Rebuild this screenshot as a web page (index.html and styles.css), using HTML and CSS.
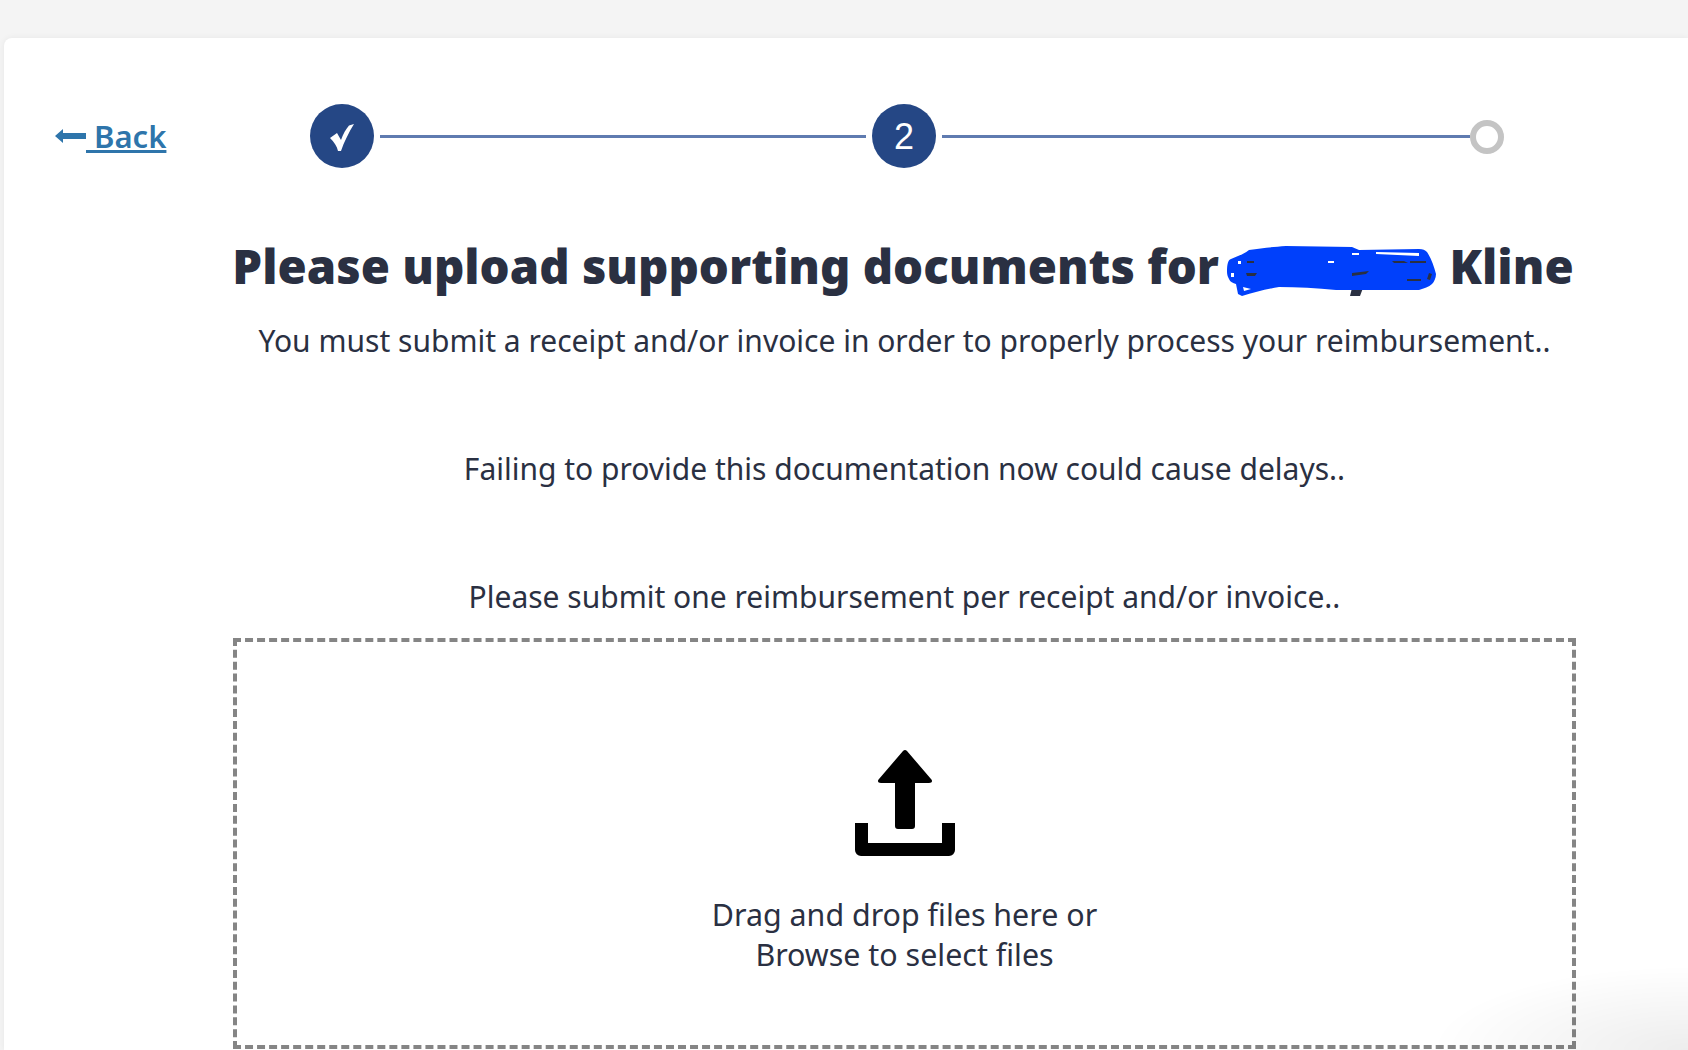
FILE: index.html
```html
<!DOCTYPE html>
<html lang="en">

<head>
    <meta charset="UTF-8">
    <title>Upload supporting documents</title>
    <link rel="stylesheet" href="styles.css">
</head>

<body>

    <div class="card">
        <!-- Back link and steps -->
        <div class="top-row">
            <a href="#" class="back">
                <svg class="back-arrow" width="31" height="16" viewBox="0 0 31 16"><path d="M0 8 8 1v4h23v6H8v4z" fill="#2e75ab"/></svg><span class="back-text">&nbsp;Back</span>
            </a>
            <div class="stepper">
                <div class="step">
                    <svg width="64" height="64" viewBox="0 0 64 64"><path d="M20 34 27 29 31 36C33 30 36 25 39 21.500L44 20C39 28 34 38 31 47H28C27 42 24 38 20 34z" fill="#fff"/></svg>
                </div>
                <div class="step-line step-line-first"></div>
                <div class="step step-number">2</div>
                <div class="step-line"></div>
                <div class="step-todo"></div>
            </div>
        </div>

        <!-- Main content -->
        <div class="content">
            <h1>Please upload supporting documents for <span class="redacted"><svg width="210" height="52" viewBox="0 0 210 52"><path d="M125 42h11l-3 8h-10z" fill="#2a3042"/><path d="M0 26C0 18 1 14 4 13 10 10 16 9 22 4 35 2 45 1 59 0L125 1 132 4 192 3C196 3 198 4 200 6 204 12 207 20 209 28 209 32 207 36 205 38 202 41 197 42 192 44L109 44C90 42 70 41 52 41 40 43 27 46 15 50L11 48 9 38C6 37 3 36 2 33 1 31 0 29 0 26z" fill="#0040fb"/><path d="M19 27h11l-2 3H20zM20 15h7v2h-7zM125 27l17-2-3 3-14 2zM165 15h12l4 2h-14zM183 15h16v2h-16zM180 33h14v2h-14zM202 27l3 1-2 6-3-1z" fill="#2a3042"/><path d="M149 6l43 1v3l-43-2zM125 7h7v2h-7zM101 15h6v2h-6zM11 15h3v3h-3zM4 27h3v4H4zM16 41l8 2-7 2z" fill="#fff"/></svg></span> Kline</h1>
            <p>You must submit a receipt and/or invoice in order to properly process your reimbursement..</p>
            <p>Failing to provide this documentation now could cause delays..</p>
            <p>Please submit one reimbursement per receipt and/or invoice..</p>

            <div class="dropzone">
                <svg class="upload-icon" width="100" height="106" viewBox="0 0 100 106">
                    <path d="M48 1a3 3 0 0 1 4 0L76 29c2 2 1 4-2 4H60v43a3 3 0 0 1-3 3H43a3 3 0 0 1-3-3V33H26c-3 0-4-2-2-4z"/>
                    <path d="M0 73h13v20h74V73h13v27a6 6 0 0 1-6 6H6a6 6 0 0 1-6-6z"/>
                </svg>
                <div class="drop-text">Drag and drop files here or<br>Browse to select files</div>
            </div>
        </div>
    </div>

    <div class="corner-shade"></div>

</body>

</html>
```

FILE: styles.css
```css
html, body {
    height: 100%;
    overflow: hidden;
}

body {
    font-family: 'Noto Sans', sans-serif;
    margin: 0;
    padding: 38px 0 0 4px;
    box-sizing: border-box;
    background-color: #f4f4f4;
    color: #2a3042;
}

.card {
    background-color: white;
    border-radius: 8px 0 0 0;
    box-shadow: 0 0 6px rgba(0, 0, 0, 0.06);
    height: 1012px;
    padding-left: 51px;
}

/* Back link and steps */
.top-row {
    display: flex;
    align-items: flex-start;
    padding-top: 66px;
}

.back {
    display: flex;
    align-items: center;
    width: 255px;
    height: 64px;
    color: #2e75ab;
    font-size: 31px;
    font-weight: 600;
    text-decoration: none;
}

.back-text {
    text-decoration: underline;
}

.stepper {
    display: flex;
    align-items: center;
    width: 1194px;
}

.step {
    display: flex;
    align-items: center;
    justify-content: center;
    flex: none;
    width: 64px;
    height: 64px;
    border-radius: 50%;
    background-color: #254785;
    color: white;
    font-family: 'Liberation Sans', sans-serif;
    font-size: 36px;
}

.step-number {
    box-sizing: border-box;
    padding-top: 2px;
}

.step-line {
    flex: 1;
    height: 3px;
    margin-left: 6px;
    background-color: #5f7bb0;
}

.step-line-first {
    flex: none;
    width: 486px;
    margin-right: 6px;
}

.step-todo {
    flex: none;
    width: 34px;
    height: 34px;
    margin-top: 1px;
    box-sizing: border-box;
    border: 6px solid #c4c4c4;
    border-radius: 50%;
}

/* Main content */
.content {
    width: 1343px;
    margin-left: 178px;
    text-align: center;
}

h1 {
    margin: 67px 0 0 -3px;
    font-size: 47.300px;
    line-height: 62px;
    font-weight: 900;
    white-space: nowrap;
}

.redacted {
    display: inline-block;
    width: 210px;
    height: 52px;
    margin-left: -4px;
    vertical-align: -14px;
}

p {
    margin: 0 0 88px;
    font-size: 30px;
    line-height: 40px;
}

h1 + p {
    margin-top: 23px;
}

.content p:last-of-type {
    margin-bottom: 21px;
}

.dropzone {
    box-sizing: border-box;
    height: 411px;
    padding-top: 108px;
    border: 4px dashed #858585;
}

.upload-icon {
    display: block;
    margin: 0 auto 39px;
}

.drop-text {
    font-size: 30.400px;
    line-height: 40px;
}

/* Soft shade in the corner of the window */
.corner-shade {
    position: fixed;
    right: 0;
    bottom: 0;
    width: 260px;
    height: 85px;
    pointer-events: none;
    background: radial-gradient(ellipse at 100% 100%, rgba(0, 0, 0, 0.07), rgba(0, 0, 0, 0) 70%);
}
```
